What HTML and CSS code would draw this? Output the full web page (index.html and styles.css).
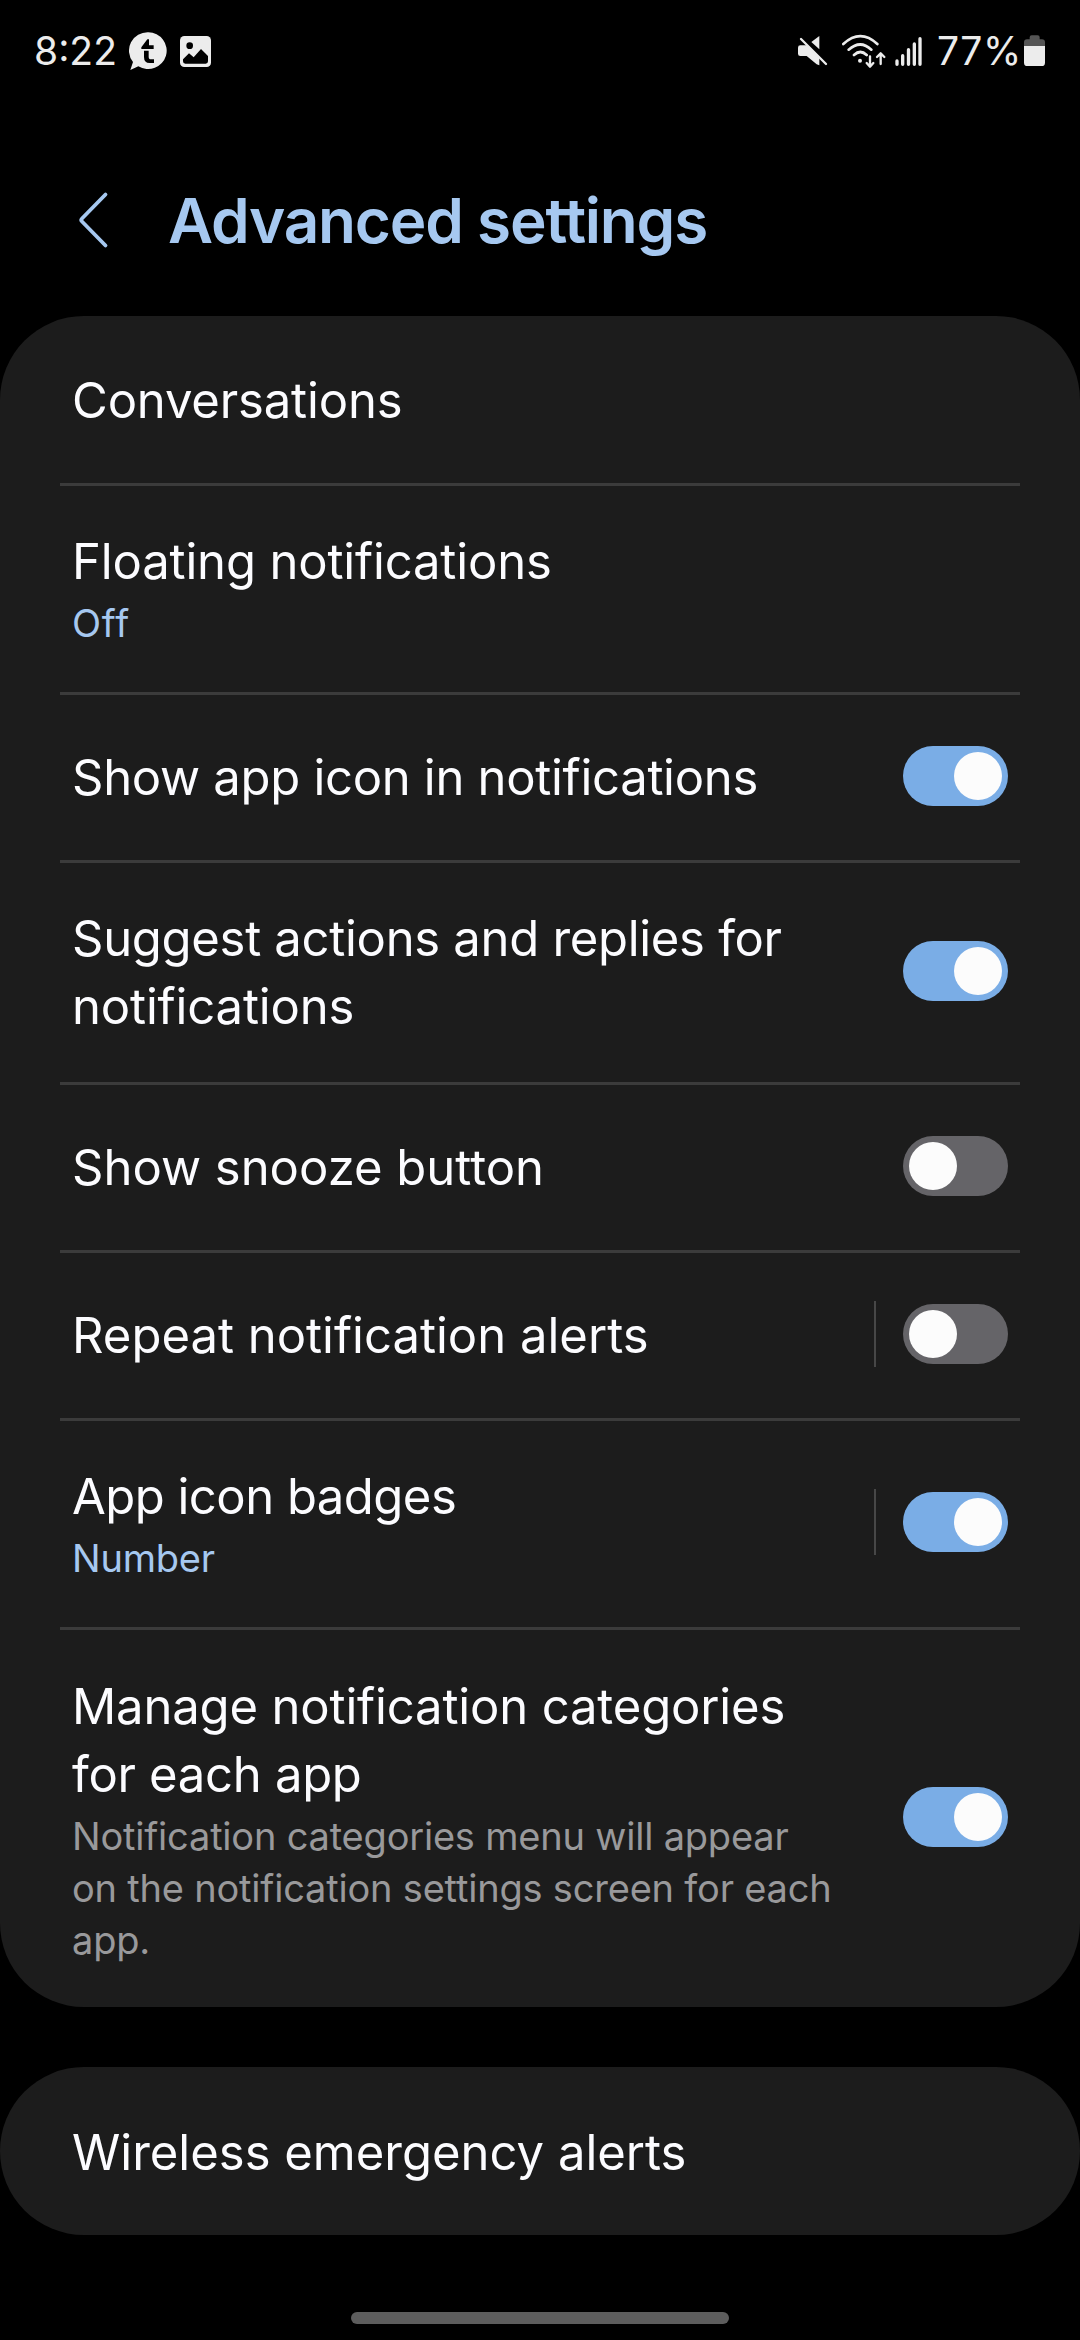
FILE: index.html
```html
<!DOCTYPE html>
<html lang="en">
<head>
<meta charset="utf-8">
<title>Advanced settings</title>
<link rel="stylesheet" href="styles.css">
</head>
<body>
<div class="status-bar">
  <span class="clock">8:22</span>
  <svg class="icon-chat" width="38" height="38" viewBox="387 96 114 114">
    <path fill="#ececec" d="M445 97a56 55 0 1 1-30 102l-24 11 8-24a56 55 0 0 1 46-89z"/>
    <path fill="#000" d="M424 142l18-24h5v18h14v11h-37zM432 152h14v18q0 8 7 8h9v11h-13q-17 0-17-18z"/>
  </svg>
  <svg class="icon-photo" width="31" height="31" viewBox="540 108 93 93">
    <rect x="540" y="108" width="93" height="93" rx="13" fill="#ececec"/>
    <circle cx="569" cy="137" r="10" fill="#000"/>
    <path fill="#000" d="M549 178l18-18 14 12 22-25 21 21v16q0 7-7 7h-61q-7 0-7-7z"/>
  </svg>
  <span class="spacer"></span>
  <svg class="icon-mute" width="31" height="32" viewBox="51 105 93 96">
    <path fill="#ececec" d="M94 126l24-18v40zM61 136h20l37 38v22l-8-3-30-25H61q-7 0-7-7v-18q0-7 7-7z"/>
    <path stroke="#ececec" stroke-width="7" stroke-linecap="round" d="M63 117l75 75"/>
  </svg>
  <svg class="icon-wifi" width="45" height="36" viewBox="183 96 135 108" fill="none" stroke="#ececec" stroke-width="8" stroke-linecap="round" stroke-linejoin="round">
    <path d="M190 129q51-47 102 0M206 146q35-31 68 0M222 162q19-18 38 0"/>
    <path stroke-width="7" d="M270 166v30m-10-10l10 11 10-11M302 189v-31m-11 10l11-11 11 11"/>
    <circle cx="240" cy="179" r="6" fill="#ececec" stroke="none"/>
  </svg>
  <svg class="icon-signal" width="29" height="32" viewBox="342 102 87 96" stroke="#ececec" stroke-width="10" stroke-linecap="round">
    <path d="M351 180v10M368 164v26M385.500 146v44M403 129v61M420 113v77"/>
  </svg>
  <span class="percent">77%</span>
  <svg class="icon-battery" width="21" height="32" viewBox="732 105 63 96">
    <path fill="#555" d="M732 140v-13q0-9 9-9h8v-6q0-6 6-6h18q6 0 6 6v6h7q9 0 9 9v13z"/>
    <path fill="#ececec" d="M732 138h63v50q0 10-10 10h-43q-10 0-10-10z"/>
  </svg>
</div>

<header class="header">
  <svg class="back" width="34" height="60" viewBox="0 0 34 60" fill="none" stroke="#a6c8f0" stroke-width="3.800" stroke-linecap="round" stroke-linejoin="round">
    <path d="M29.500 4.500L6 28.500Q4.500 30 6 31.500L29.500 55.500"/>
  </svg>
  <h1>Advanced settings</h1>
</header>

<main>
  <section class="card">
    <div class="row row-first">
      <div class="text"><div class="title">Conversations</div></div>
    </div>
    <div class="row row-summary">
      <div class="text">
        <div class="title">Floating notifications</div>
        <div class="summary accent wide">Off</div>
      </div>
    </div>
    <div class="row">
      <div class="text"><div class="title snug">Show app icon in notifications</div></div>
      <div class="switch on"><span class="knob"></span></div>
    </div>
    <div class="row row-double">
      <div class="text"><div class="title"><span class="snug">Suggest actions and replies for</span><br>notifications</div></div>
      <div class="switch on"><span class="knob"></span></div>
    </div>
    <div class="row">
      <div class="text"><div class="title loose">Show snooze button</div></div>
      <div class="switch"><span class="knob"></span></div>
    </div>
    <div class="row">
      <div class="text"><div class="title loose">Repeat notification alerts</div></div>
      <span class="separator"></span>
      <div class="switch"><span class="knob"></span></div>
    </div>
    <div class="row row-summary">
      <div class="text">
        <div class="title tight">App icon badges</div>
        <div class="summary accent">Number</div>
      </div>
      <span class="separator"></span>
      <div class="switch on"><span class="knob"></span></div>
    </div>
    <div class="row row-last">
      <div class="text">
        <div class="title">Manage notification categories<br><span class="snug">for each app</span></div>
        <div class="summary">Notification categories menu will appear<br>on the notification settings screen for each<br>app.</div>
      </div>
      <div class="switch on"><span class="knob"></span></div>
    </div>
  </section>
  <section class="card">
    <div class="row">
      <div class="text"><div class="title loose">Wireless emergency alerts</div></div>
    </div>
  </section>
</main>

<div class="nav"><span class="home-handle"></span></div>
</body>
</html>
```
FILE: styles.css
```css
* {
  box-sizing: border-box;
}

body {
  margin: 0;
  width: 1080px;
  height: 2340px;
  display: flex;
  flex-direction: column;
  overflow: hidden;
  background: #000;
  color: #fcfcff;
  font-family: Inter, "Liberation Sans", sans-serif;
}

svg {
  display: block;
  flex: none;
}

.status-bar {
  height: 102px;
  padding: 0 35px 0 34px;
  display: flex;
  align-items: center;
  color: #ececec;
  font-size: 39px;
  line-height: 48px;
}

.clock {
  width: 95px;
}

.icon-photo {
  margin-left: 13px;
}

.spacer {
  flex: 1;
}

.icon-wifi {
  margin-left: 13px;
}

.icon-signal {
  margin-left: 8px;
}

.percent {
  width: 87px;
  margin-left: 14px;
  letter-spacing: 0.5px;
}

.header {
  height: 214px;
  padding: 81px 0 0 76px;
  display: flex;
  align-items: flex-start;
  color: #a6c8f0;
}

.back {
  margin-top: 7px;
}

h1 {
  margin: 0 0 0 58px;
  font-size: 62px;
  line-height: 76px;
  font-weight: 600;
  letter-spacing: -1.2px;
}

main {
  display: flex;
  flex-direction: column;
  gap: 60px;
}

.card {
  border-radius: 84px;
  background: #1c1c1c;
}

.row {
  height: 168px;
  margin: 0 60px;
  padding: 0 12px;
  display: flex;
  align-items: center;
}

.row + .row {
  box-shadow: inset 0 3px #3b3b3b;
}

.row-first {
  height: 167px;
}

.row-summary {
  height: 209px;
  padding-bottom: 1px;
}

.row-double {
  height: 222px;
}

.row-last {
  height: 380px;
}

.text {
  flex: 1;
  padding-top: 4px;
  white-space: nowrap;
}

.row-first .text {
  padding-top: 3px;
}

.row-summary .text {
  padding-top: 3px;
}

.title {
  font-size: 49px;
  line-height: 68px;
  letter-spacing: -0.16px;
}

.title.snug,
.title .snug {
  letter-spacing: -0.3px;
}

.title.tight {
  letter-spacing: -0.52px;
}

.title.loose {
  letter-spacing: 0;
}

.summary {
  margin-top: 1px;
  color: #99999b;
  font-size: 38px;
  line-height: 52px;
  letter-spacing: -0.2px;
}

.accent {
  color: #a6c8f0;
}

.summary.wide {
  letter-spacing: 0.8px;
}

.separator {
  width: 2px;
  height: 66px;
  margin-right: 27px;
  background: #474747;
}

.switch {
  flex: none;
  width: 105px;
  height: 60px;
  padding: 6px;
  display: flex;
  border-radius: 30px;
  background: #656468;
}

.switch.on {
  justify-content: flex-end;
  background: #7aade6;
}

.knob {
  width: 48px;
  height: 48px;
  border-radius: 50%;
  background: #fcfcfc;
}

.nav {
  flex: 1;
  display: flex;
  justify-content: center;
  align-items: flex-end;
  padding-bottom: 16px;
}

.home-handle {
  width: 378px;
  height: 12px;
  border-radius: 6px;
  background: #5d5d5d;
}
```
